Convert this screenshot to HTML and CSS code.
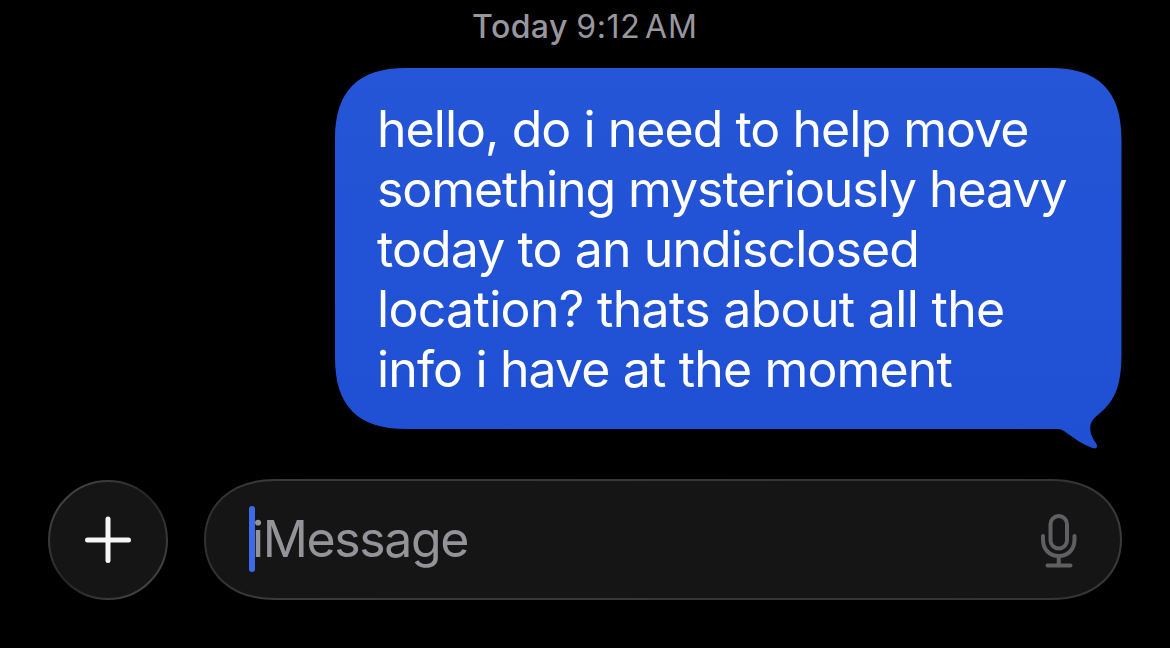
FILE: index.html
```html
<!doctype html>
<html lang="en">
    <head>
        <title>Messages</title>
        <meta charset="utf-8">
        <meta name="viewport" content="width=device-width">

        <link rel="stylesheet" href="styles.css">
    </head>

    <body>
        <p class="timestamp"><strong>Today</strong> <span class="time">9:12</span> <span class="ampm">AM</span></p>

        <div class="bubble">
            <svg class="shape" width="788" height="382" viewBox="0 0 788 382">
                <defs>
                    <linearGradient id="blue" x1="0" y1="0" x2="0" y2="1">
                        <stop offset="0" stop-color="#2556d7"/>
                        <stop offset="1" stop-color="#1f4fd3"/>
                    </linearGradient>
                </defs>
                <path fill="url(#blue)" d="M0 71C0 23 23 0 71 0H715.500C763.500 0 786.500 23 786.500 71V285C786.500 316 781 332 764 346C756 352 754 357 756 366C758 372 762 375 762 378C762 381 759 381 755 379C742 374 735 366 726 361.500Q725 361 722 361H71C23 361 0 338 0 290Z"/>
            </svg>
            <p class="text">
                <span class="line l1">hello, do i need to help move</span>
                <span class="line l2">something mysteriously heavy</span>
                <span class="line l3">today to an undisclosed</span>
                <span class="line l4">location? thats about all the</span>
                <span class="line l5">info i have at the moment</span>
            </p>
        </div>

        <div class="composer">
            <button class="add" aria-label="Add">
                <svg width="120" height="121" viewBox="0 0 120 121">
                    <defs>
                        <linearGradient id="rim" x1="0" y1="0" x2="1" y2="1">
                            <stop offset="0.150" stop-color="#414141"/>
                            <stop offset="0.500" stop-color="#252525"/>
                            <stop offset="0.850" stop-color="#414141"/>
                        </linearGradient>
                    </defs>
                    <circle cx="60" cy="61" r="59" fill="#151515" stroke="url(#rim)" stroke-width="2"/>
                    <path d="M60 40V81.500M39.500 61H80.500" stroke="#f5f5f5" stroke-width="5" stroke-linecap="round"/>
                </svg>
            </button>
            <div class="field">
                <svg class="shape" width="918" height="121" viewBox="0 0 918 121">
                    <defs>
                        <linearGradient id="edge" x1="0" y1="0" x2="1" y2="0">
                            <stop offset="0" stop-color="#303030"/>
                            <stop offset="0.060" stop-color="#3a3a3a"/>
                            <stop offset="0.940" stop-color="#343434"/>
                            <stop offset="1" stop-color="#3a3a3a"/>
                        </linearGradient>
                    </defs>
                    <path fill="#151515" stroke="url(#edge)" stroke-width="2" d="M1 60.500C1 28 25 1 71 1H847C893 1 917 28 917 60.500S893 120 847 120H71C25 120 1 93 1 60.500Z"/>
                </svg>
                <span class="caret"></span>
                <span class="placeholder">iMessage</span>
                <svg class="mic" width="36" height="54" viewBox="0 0 36 54" fill="none" stroke="#606063" stroke-width="4" stroke-linecap="round">
                    <rect x="9.500" y="2" width="16.500" height="32.500" rx="8.250"/>
                    <path d="M2 22V25.500C2 35.500 8.500 42 17.750 42S33.500 35.500 33.500 25.500V22M17.750 42V51.500M6.500 51.500H29.500"/>
                </svg>
            </div>
        </div>
    </body>
</html>
```

FILE: styles.css
```css
body {
    background-color: black;
    color: white;
    font-family: Inter, "Liberation Sans", sans-serif;
    height: 648px;
    margin: 0;
    overflow: hidden;
}
p {
    margin: 0;
}
svg {
    display: block;
}
.timestamp {
    box-sizing: border-box;
    color: #98979e;
    font-size: 32px;
    height: 68px;
    letter-spacing: 0.6px;
    line-height: 40px;
    padding-top: 7px;
    text-align: center;
    word-spacing: -1px;
}
.timestamp strong {
    font-weight: 500;
    letter-spacing: 0.4px;
}
.ampm {
    letter-spacing: 1px;
    margin-left: -4px;
}
.bubble {
    box-sizing: border-box;
    height: 361px;
    margin-left: 335px;
    padding: 31px 0 0 42px;
    position: relative;
    width: 787px;
}
.shape {
    left: 0;
    position: absolute;
    top: 0;
}
.text {
    font-size: 50px;
    line-height: 60px;
    position: relative;
    white-space: nowrap;
}
.line {
    display: block;
    width: max-content;
}
/* tighten each line to its own measure */
.l1 {
    letter-spacing: -0.96px;
}
.l2 {
    letter-spacing: -1.06px;
}
.l3 {
    letter-spacing: -0.9px;
}
.l4 {
    letter-spacing: -0.68px;
}
.l5 {
    letter-spacing: -0.86px;
}
.composer {
    display: flex;
    gap: 36px;
    margin-top: 50px;
    padding-left: 48px;
}
.add {
    background: none;
    border: 0;
    height: 121px;
    padding: 0;
    width: 120px;
}
.field {
    align-items: center;
    box-sizing: border-box;
    display: flex;
    height: 121px;
    padding: 0 45px 2px 45px;
    position: relative;
    width: 918px;
}
.caret {
    background-color: #3e6ae8;
    border-radius: 3px;
    height: 66px;
    position: relative;
    width: 6px;
}
.placeholder {
    color: #949399;
    flex: 1;
    font-size: 50px;
    letter-spacing: -1.4px;
    line-height: 60px;
    margin-left: -3px;
    position: relative;
}
.mic {
    margin-top: 4px;
    position: relative;
}
```
